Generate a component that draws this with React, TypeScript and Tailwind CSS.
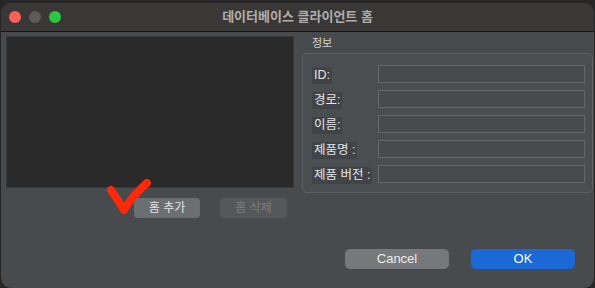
const FONT = "font-['Liberation_Sans','Noto_Sans_CJK_KR',sans-serif]";

const FIELDS = ["ID:", "경로:", "이름:", "제품명 :", "제품 버전 :"];

function TrafficLights() {
  return (
    <div className="flex items-center gap-[8px] pl-[8px]">
      <span className="w-[12px] h-[12px] rounded-full bg-[#fe5f57]" />
      <span className="w-[12px] h-[12px] rounded-full bg-[#5b5b5b]" />
      <span className="w-[12px] h-[12px] rounded-full bg-[#28c840]" />
    </div>
  );
}

// red hand-drawn tick over the add button
function Check() {
  return (
    <svg
      className="absolute left-[94px] top-[-23px] pointer-events-none"
      width="60"
      height="45"
      viewBox="100 175 60 45"
    >
      <path
        d="M111 190 Q118 200 124 210 Q133 195 147 183"
        fill="none"
        stroke="#fb2a0c"
        strokeWidth="8"
        strokeLinecap="round"
        strokeLinejoin="round"
      />
    </svg>
  );
}

export default function App() {
  return (
    <div className={`w-[595px] h-[288px] overflow-hidden bg-[#262626] pt-[3px] pl-[1px] ${FONT}`}>
      <div className="w-[593px] h-[285px] rounded-[10px] overflow-hidden bg-[#474b4e] flex flex-col">
        {/* title bar */}
        <div className="relative h-[29px] shrink-0 bg-[#393836] border-b border-[#161616] flex items-center">
          <TrafficLights />
          <div className="absolute inset-0 flex items-center justify-center text-[13px] font-bold text-[#aeaeae]">
            데이터베이스 클라이언트 홈
          </div>
        </div>

        <div className="flex">
          {/* left */}
          <div className="w-[296px] pl-[5px] pt-[4px] shrink-0">
            <div className="w-[288px] h-[152px] bg-[#2a2a2a] border border-[#393a3a]" />
            <div className="relative flex gap-[20px] pl-[128px] mt-[10px]">
              <button className="w-[66px] h-[20px] rounded-[4px] bg-[#6b6f71] text-[12px] text-[#e4e4e4]">
                홈 추가
              </button>
              <button className="w-[67px] h-[20px] rounded-[4px] bg-[#54585b] text-[12px] text-[#7b7f82]">
                홈 삭제
              </button>
              <Check />
            </div>
          </div>

          {/* right */}
          <div className="flex-1 pt-[5px] pl-[5px] pr-[1px]">
            <div className="text-[11px] text-[#d4d4d4] leading-[13px] pl-[10px]">정보</div>
            <div className="mt-[3px] h-[140px] rounded-[5px] border border-[#5c6063] bg-[#4a4e51] pt-[11px] pl-[9px] pr-[6px] flex flex-col gap-[7px]">
              {FIELDS.map((f) => (
                <div key={f} className="flex items-center h-[18px]">
                  <div className="w-[66px] shrink-0">
                    <span className="inline-block h-[17px] leading-[17px] px-[2px] bg-[#404447] text-[12.5px] text-[#e6e6e6]">
                      {f}
                    </span>
                  </div>
                  <div className="w-[207px] h-[18px] bg-[#474b4e] border border-[#65696c]" />
                </div>
              ))}
            </div>
          </div>
        </div>

        {/* footer */}
        <div className="flex gap-[22px] pl-[344px] mt-[31px]">
          <button className="w-[104px] h-[20px] rounded-[5px] bg-[#75797b] text-[13px] text-[#ececec]">
            Cancel
          </button>
          <button className="w-[104px] h-[20px] rounded-[5px] bg-[#1b69d6] text-[13px] text-white">
            OK
          </button>
        </div>
      </div>
    </div>
  );
}
